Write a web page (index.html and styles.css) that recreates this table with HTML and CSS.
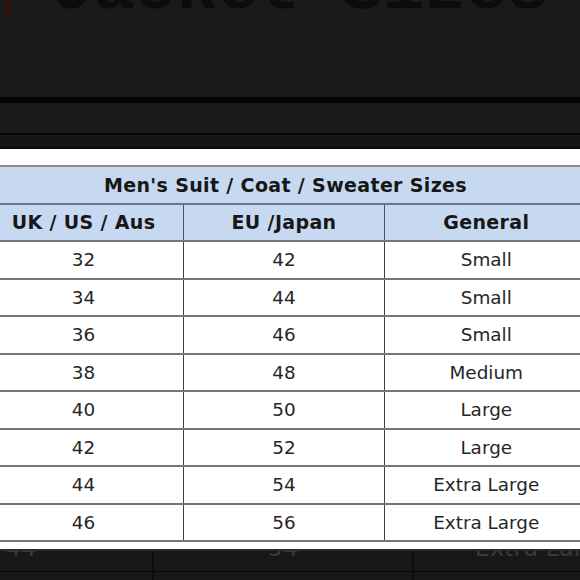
FILE: index.html
```html
<!DOCTYPE html>
<html lang="en">
<head>
<meta charset="utf-8">
<title>Jacket Sizes</title>
<link rel="stylesheet" href="styles.css">
</head>
<body>
<div class="screen">
  <div class="title-area">
    <span class="red-mark"></span>
    <h1 class="title">Jacket Sizes</h1>
  </div>
  <div class="rule rule-thick"></div>
  <div class="band band-a"></div>
  <div class="rule rule-thin"></div>
  <div class="band band-b"></div>
  <div class="rule rule-thin2"></div>

  <div class="sheet">
    <table class="sizes">
      <colgroup>
        <col class="c1"><col class="c2"><col class="c3">
      </colgroup>
      <thead>
        <tr class="caption-row"><th colspan="3">Men's Suit / Coat / Sweater Sizes</th></tr>
        <tr class="head-row"><th>UK / US / Aus</th><th>EU /Japan</th><th>General</th></tr>
      </thead>
      <tbody>
        <tr><td>32</td><td>42</td><td>Small</td></tr>
        <tr><td>34</td><td>44</td><td>Small</td></tr>
        <tr><td>36</td><td>46</td><td>Small</td></tr>
        <tr><td>38</td><td>48</td><td>Medium</td></tr>
        <tr><td>40</td><td>50</td><td>Large</td></tr>
        <tr><td>42</td><td>52</td><td>Large</td></tr>
        <tr><td>44</td><td>54</td><td>Extra Large</td></tr>
        <tr><td>46</td><td>56</td><td>Extra Large</td></tr>
      </tbody>
    </table>
  </div>

  <div class="ghost">
    <div class="ghost-row ghost-first">
      <div class="g g1">44</div><div class="g g2">54</div><div class="g g3">Extra Large</div>
    </div>
    <div class="ghost-row">
      <div class="g g1"></div><div class="g g2"></div><div class="g g3"></div>
    </div>
  </div>
</div>
</body>
</html>
```

FILE: styles.css
```css
html, body {
  margin: 0;
  padding: 0;
  background: #1a1a1a;
}

.screen {
  width: 580px;
  height: 580px;
  overflow: hidden;
  background: #1a1a1a;
  font-family: "DejaVu Sans", Verdana, sans-serif;
}

.title-area {
  height: 97px;
  display: flex;
  align-items: flex-start;
  overflow: hidden;
}

.red-mark {
  flex: none;
  width: 3px;
  height: 19px;
  margin-left: 7px;
  background: #3a0c0c;
}

.title {
  margin: -44px 0 0 42px;
  font-family: "Liberation Mono", "Courier New", monospace;
  font-weight: bold;
  font-size: 69px;
  line-height: 68px;
  color: #0c0c0c;
  white-space: nowrap;
}

.rule-thick { height: 6px; background: #050505; }
.band-a { height: 30px; background: #1a1a1a; }
.rule-thin { height: 2px; background: #070707; }
.band-b { height: 12px; background: #151515; }
.rule-thin2 { height: 2px; background: #0b0b0b; }

.sheet {
  height: 400px;
  background: #ffffff;
  padding-top: 16px;
  box-sizing: border-box;
  overflow: hidden;
}

.sizes {
  margin-left: -17px;
  border-collapse: collapse;
  table-layout: fixed;
  width: 604px;
  color: #262626;
  font-size: 18px;
}

.c1 { width: 200px; }
.c2 { width: 201px; }
.c3 { width: 203px; }

.sizes th,
.sizes td {
  height: 35.5px;
  padding: 0;
  text-align: center;
  vertical-align: middle;
  border-top: 2px solid #767676;
  border-left: 1px solid #3f3f3f;
}

.sizes td {
  font-size: 18.4px;
}

.sizes th {
  background: #c6d9f1;
  color: #171717;
  font-weight: bold;
  font-size: 19px;
  letter-spacing: 0.35px;
}

.caption-row th {
  border-top: 2px solid #8a8a8a;
  border-left: none;
}

.head-row th {
  border-top: 2px solid #6d7686;
  border-left: 1px solid #4a5260;
}

.sizes tbody tr:last-child td {
  border-bottom: 2px solid #777777;
}

.ghost {
  height: 31px;
  background: #181818;
  border-top: 2px solid #2a2a2a;
  overflow: hidden;
}

.ghost-row {
  display: flex;
  margin-left: -110px;
}

.ghost-first {
  margin-top: -23px;
  height: 43px;
  border-bottom: 1px solid #0a0a0a;
}

.g {
  flex: none;
  height: 43px;
  line-height: 40px;
  text-align: center;
  font-size: 24px;
  color: #3a3a3a;
  border-right: 2px solid #0d0d0d;
  box-sizing: border-box;
}

.g1 { width: 264px; }
.g2 { width: 260px; }
.g3 { width: 260px; border-right: none; }
```
